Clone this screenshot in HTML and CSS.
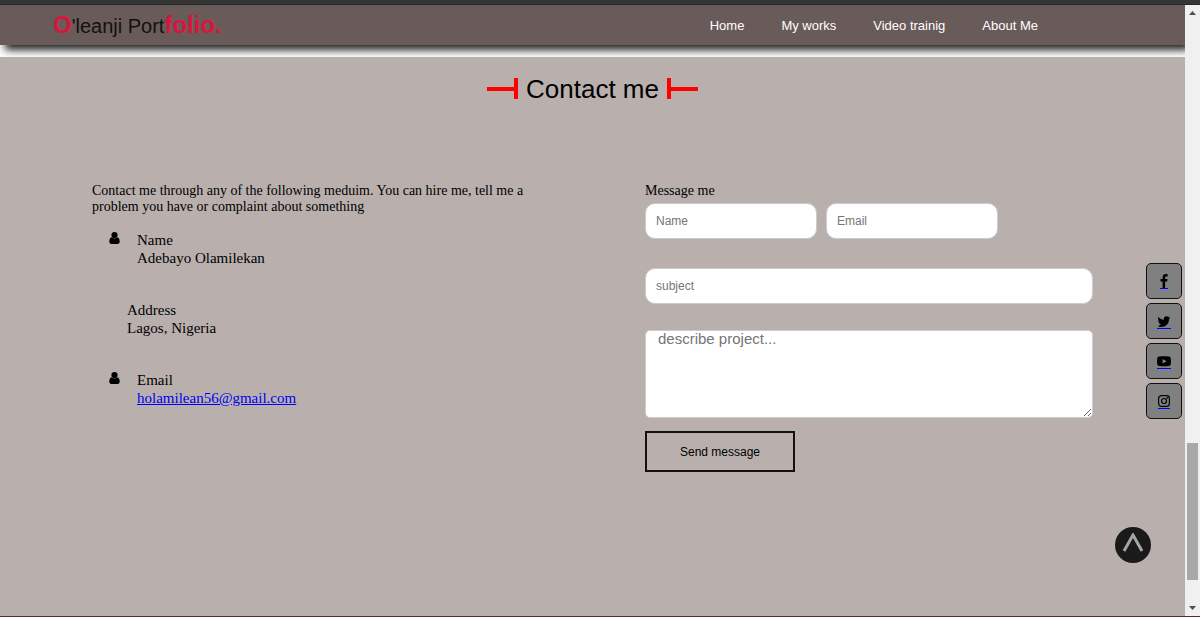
FILE: index.html
```html
<!DOCTYPE html>
<html lang="en">
<head>
  <meta charset="UTF-8">
  <meta name="viewport" content="width=device-width, initial-scale=1.0">
  <title>O'leanji Portfolio</title>
  <link rel="stylesheet" href="styles.css">
</head>
<body>
  <div class="top-edge"></div>

  <div class="window">
    <div class="page">
      <header>
        <a class="logo" href="#home"><b>O</b>'leanji Port<b>folio.</b></a>
        <nav>
          <ul>
            <li><a href="#home">Home</a></li>
            <li><a href="#works">My works</a></li>
            <li><a href="#videos">Video trainig</a></li>
            <li><a href="#about">About Me</a></li>
          </ul>
        </nav>
      </header>

      <main id="contact">
        <h2>
          <svg width="32" height="22" viewBox="0 0 32 22" aria-hidden="true"><path d="M0 9h27v4H0zM27 0h4v21h-4z"/></svg>
          Contact me
          <svg width="32" height="22" viewBox="0 0 32 22" aria-hidden="true"><path d="M1 0h4v21H1zM5 9h27v4H5z"/></svg>
        </h2>

        <div class="columns">
          <section class="details">
            <p>Contact me through any of the following meduim. You can hire me, tell me a problem you have or complaint about something</p>
            <div class="row">
              <svg class="user" viewBox="0 0 11 14" aria-hidden="true"><circle cx="5.500" cy="4" r="3.100"/><path d="M2.600 6.300C1 6.600.3 8.300.3 10.500.3 12 1.100 13 2.300 13h6.400c1.200 0 2-1 2-2.500 0-2.200-.7-3.900-2.300-4.200-1.600 1.500-4.200 1.500-5.800 0z"/></svg>
              <div class="info">
                <div>Name</div>
                <div>Adebayo Olamilekan</div>
              </div>
            </div>
            <div class="row no-icon">
              <div class="info">
                <div>Address</div>
                <div>Lagos, Nigeria</div>
              </div>
            </div>
            <div class="row">
              <svg class="user" viewBox="0 0 11 14" aria-hidden="true"><circle cx="5.500" cy="4" r="3.100"/><path d="M2.600 6.300C1 6.600.3 8.300.3 10.500.3 12 1.100 13 2.300 13h6.400c1.200 0 2-1 2-2.500 0-2.200-.7-3.900-2.300-4.200-1.600 1.500-4.200 1.500-5.800 0z"/></svg>
              <div class="info">
                <div>Email</div>
                <div><a href="mailto:holamilean56@gmail.com">holamilean56@gmail.com</a></div>
              </div>
            </div>
          </section>

          <form>
            <label for="name">Message me</label>
            <div class="fields">
              <input type="text" id="name" placeholder="Name" required>
              <input type="email" id="email" placeholder="Email" aria-label="Email" required>
            </div>
            <input type="text" id="subject" placeholder="subject" aria-label="Subject" required>
            <textarea id="message" placeholder="describe project..." aria-label="Describe project" required></textarea>
            <button type="submit">Send message</button>
          </form>
        </div>
      </main>
    </div>

    <div class="scrollbar" aria-hidden="true">
      <svg width="7" height="4" viewBox="0 0 7 4"><path d="M0 4L3.500 0 7 4z"/></svg>
      <div class="track"><div class="thumb"></div></div>
      <svg width="7" height="4" viewBox="0 0 7 4"><path d="M0 0L3.500 4 7 0z"/></svg>
    </div>
  </div>

  <div class="bottom-edge"></div>

  <div class="social">
    <a href="#facebook" aria-label="Facebook">
      <svg width="8" height="14" viewBox="0 0 8 14"><path d="M7.600.2v2.200H6.300c-1 0-1.200.5-1.200 1.200v1.500h2.400l-.3 2.400H5.100V14H2.600V7.500H.5V5.100h2.100V3.300C2.600 1.200 3.900 0 5.800 0c.9 0 1.600.1 1.800.2z"/></svg>
    </a>
    <a href="#twitter" aria-label="Twitter">
      <svg width="14" height="14" viewBox="0 0 13 14"><path d="M12.800 3.700c-.4.500-.8 1-1.300 1.300v.4c0 3.500-2.700 7.500-7.500 7.500-1.500 0-2.900-.4-4-1.200 1.400.2 2.800-.2 3.900-1.100-1.200 0-2.100-.8-2.500-1.800.4.100.8.100 1.200 0C1.300 8.500.5 7.400.5 6.200c.4.200.8.300 1.200.3C.5 5.600.1 4.200.9 3c1.300 1.600 3.300 2.600 5.400 2.700C5.900 4 7.200 2.300 8.900 2.300c.8 0 1.400.3 1.900.8.600-.1 1.200-.3 1.700-.6-.2.600-.6 1.100-1.200 1.500.5-.1 1-.2 1.500-.3z"/></svg>
    </a>
    <a href="#youtube" aria-label="YouTube">
      <svg width="14" height="14" viewBox="0 0 14 14"><path fill-rule="evenodd" d="M2.200 2.400c2.800-.3 6.800-.3 9.600 0 1.200.1 1.800.8 2 2 .2 1.800.2 3.900 0 5.600-.2 1.200-.8 1.900-2 2-2.800.3-6.800.3-9.600 0-1.200-.1-1.800-.8-2-2C0 8.300 0 6.200.2 4.400c.2-1.200.8-1.900 2-2zM5.600 5v4.400l4-2.200z"/></svg>
    </a>
    <a href="#instagram" aria-label="Instagram">
      <svg width="12" height="14" viewBox="0 0 12 14"><rect class="line" x=".6" y="1.600" width="10.800" height="10.800" rx="2.800"/><circle class="line" cx="6" cy="7" r="2.500"/><circle cx="9.200" cy="3.900" r=".8"/></svg>
    </a>
  </div>

  <a class="to-top" href="#home" aria-label="Back to top">
    <svg width="22" height="20" viewBox="0 0 22 20"><path d="M2 18L11 2l9 16"/></svg>
  </a>
</body>
</html>
```

FILE: styles.css
```css
* {
  box-sizing: border-box;
}
body {
  margin: 0;
  min-height: 100vh;
  display: flex;
  flex-direction: column;
  font-family: "Liberation Serif", "Times New Roman", serif;
  color: #000;
  background-color: #fff;
}
.top-edge {
  height: 5px;
  background-color: #353535;
  border-bottom: 1px solid #292626;
}
.bottom-edge {
  height: 1px;
  background-color: #50302c;
}
.window {
  flex: 1;
  display: flex;
}
.page {
  flex: 1;
  display: flex;
  flex-direction: column;
  gap: 12px;
  overflow: hidden;
}
header {
  height: 40px;
  padding: 0 147px 0 53px;
  display: flex;
  align-items: center;
  justify-content: space-between;
  background-color: #695b59;
  box-shadow: 5px 5px 8px #222;
  font-family: "Liberation Sans", Arial, sans-serif;
}
.logo {
  color: #111;
  font-size: 20px;
  text-decoration: none;
}
.logo b {
  color: crimson;
  font-size: 24px;
}
nav ul {
  list-style: none;
  margin: 0;
  padding: 0;
  display: flex;
  gap: 37px;
}
nav a {
  color: #fff;
  font-size: 13px;
  text-decoration: none;
}
main {
  flex: 1;
  padding: 16px 92px 0;
  background-color: #b9b0ae;
}
h2 {
  margin: 0;
  display: flex;
  align-items: center;
  justify-content: center;
  gap: 7px;
  font-family: "Liberation Sans", Arial, sans-serif;
  font-size: 26px;
  line-height: 32px;
  font-weight: normal;
}
h2 svg {
  fill: red;
}
.columns {
  margin-top: 78px;
  display: grid;
  grid-template-columns: 1fr 1fr;
  gap: 105px;
}
.details p {
  margin: 0 0 16px;
  font-size: 14px;
  line-height: 16px;
}
.row {
  display: flex;
  gap: 17px;
  padding-left: 17px;
  margin-bottom: 34px;
  font-size: 15px;
  line-height: 18px;
}
.no-icon {
  padding-left: 35px;
}
.user {
  width: 11px;
  height: 14px;
}
form {
  display: flex;
  flex-direction: column;
  align-items: flex-start;
}
label {
  font-size: 14px;
  line-height: 16px;
  margin-bottom: 4px;
}
.fields {
  width: 100%;
  display: flex;
  gap: 9px;
  margin-bottom: 29px;
}
input, textarea {
  width: 100%;
  border: 1px solid #ccc;
  background-color: #fff;
  font-family: "Liberation Sans", Arial, sans-serif;
}
input {
  height: 36px;
  padding: 0 10px;
  border-radius: 10px;
  font-size: 12px;
}
.fields input {
  width: 172px;
}
textarea {
  height: 88px;
  margin: 26px 0 13px;
  padding: 0 12px;
  border-radius: 5px;
  font-size: 15px;
  line-height: 16px;
}
::placeholder {
  color: #757575;
}
button {
  width: 150px;
  height: 41px;
  border: 2px solid #111;
  background-color: transparent;
  color: #000;
  font-family: "Liberation Sans", Arial, sans-serif;
  font-size: 12px;
  cursor: pointer;
}
button:hover {
  background-color: #695b59;
}
.social {
  position: fixed;
  top: 263px;
  right: 18px;
  display: flex;
  flex-direction: column;
  gap: 4px;
}
.social a {
  width: 36px;
  height: 36px;
  display: flex;
  align-items: center;
  justify-content: center;
  border: 1px solid #111;
  border-radius: 5px;
  background-color: gray;
}
.social svg {
  box-sizing: content-box;
  padding-top: 1px;
  border-bottom: 1px solid #00f;
}
.social .line {
  fill: none;
  stroke: #000;
  stroke-width: 1.2;
}
.to-top {
  position: fixed;
  right: 49px;
  bottom: 54px;
  width: 36px;
  height: 36px;
  display: flex;
  align-items: center;
  justify-content: center;
  padding-bottom: 4px;
  border-radius: 50%;
  background-color: #1a1a1a;
}
.to-top path {
  fill: none;
  stroke: #a5a5a5;
  stroke-width: 3;
}
.scrollbar {
  width: 15px;
  padding: 6px 0;
  display: flex;
  flex-direction: column;
  align-items: center;
  gap: 7px;
  background-color: #f0f0f0;
}
.scrollbar svg {
  fill: #505050;
}
.track {
  flex: 1;
  width: 11px;
  display: flex;
  flex-direction: column;
  justify-content: flex-end;
  padding-bottom: 19px;
}
.thumb {
  height: 24.5%;
  background-color: #a8a8a8;
}
```
